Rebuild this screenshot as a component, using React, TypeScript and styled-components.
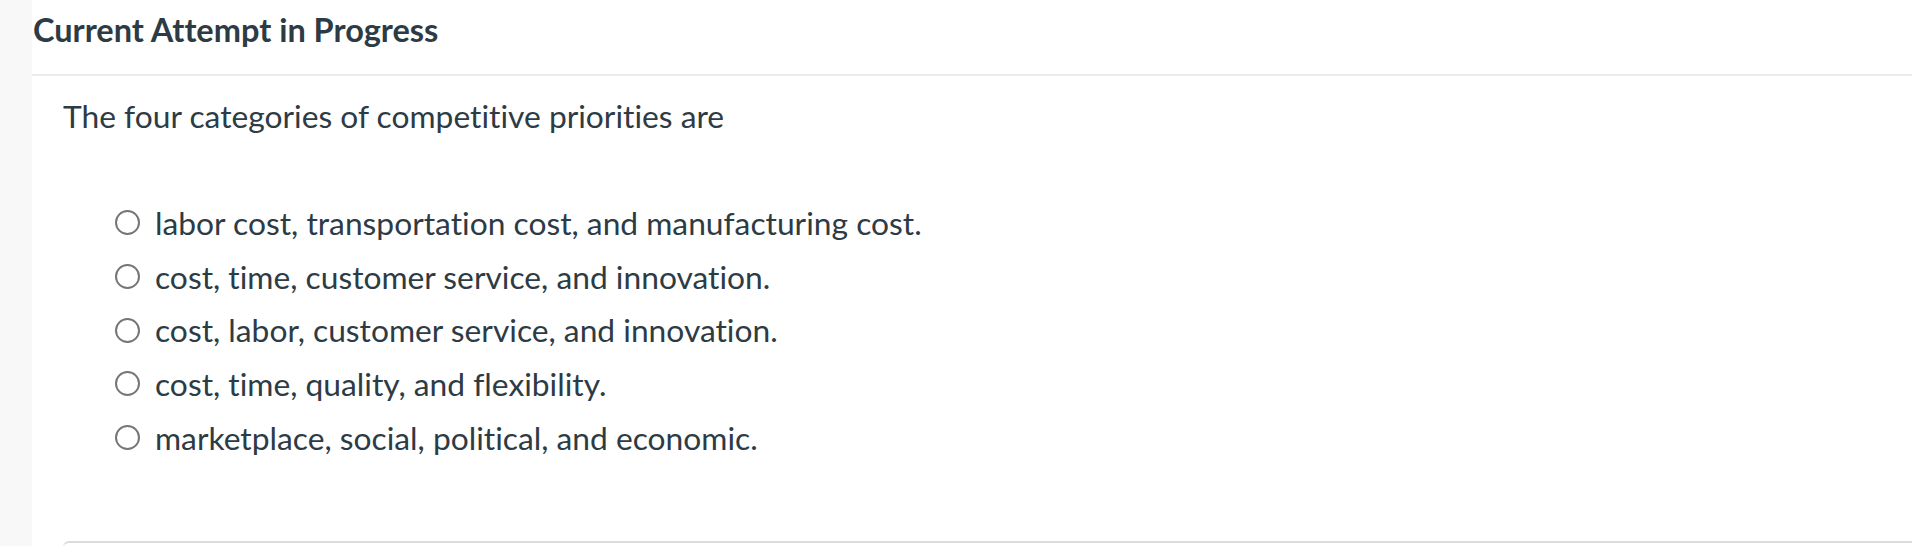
import React from "react";
import styled, { createGlobalStyle } from "styled-components";

const Global = createGlobalStyle`
  html, body { margin: 0; padding: 0; background: #ffffff; }
  body {
    font-family: Lato, "Open Sans", sans-serif;
    color: #2d3b45;
    font-variant-ligatures: none;
  }
`;

const Page = styled.div`
  display: flex;
  height: 546px;
  overflow: hidden;
`;

const SideStrip = styled.div`
  width: 32px;
  flex: none;
  background: #f8f8f8;
`;

const Main = styled.div`
  flex: 1;
  display: flex;
  flex-direction: column;
`;

const Header = styled.h2`
  margin: 0;
  padding: 10px 0 0 1px;
  height: 76px;
  flex: none;
  box-sizing: border-box;
  font-size: 32.5px;
  font-weight: 700;
  line-height: 40px;
  color: #2d3b45;
  border-bottom: 2px solid #ececec;
`;

const Body = styled.div`
  flex: none;
  padding: 16px 0 0 31px;
`;

const Question = styled.p`
  margin: 0;
  font-size: 31.75px;
  line-height: 48px;
`;

const OptionList = styled.ul`
  list-style: none;
  margin: 0;
  padding: 56px 0 0 52px;
  display: flex;
  flex-direction: column;
`;

const Option = styled.li`
  display: flex;
  align-items: center;
  height: 53.7px;
  font-size: 31.75px;
  gap: 15px;
`;

const Radio = styled.span`
  width: 25px;
  height: 25px;
  box-sizing: border-box;
  border: 2px solid #767676;
  border-radius: 50%;
  flex: none;
`;

const OptionText = styled.span`
  line-height: 40px;
`;

const NextBox = styled.div`
  margin: 77px 0 0 31px;
  height: 40px;
  flex: none;
  border-top: 2px solid #dcdcdc;
  border-left: 1px solid #e6e6e6;
  border-top-left-radius: 6px;
`;

const options = [
  "labor cost, transportation cost, and manufacturing cost.",
  "cost, time, customer service, and innovation.",
  "cost, labor, customer service, and innovation.",
  "cost, time, quality, and flexibility.",
  "marketplace, social, political, and economic.",
];

export default function App() {
  return (
    <Page>
      <Global />
      <SideStrip />
      <Main>
        <Header>Current Attempt in Progress</Header>
        <Body>
          <Question>The four categories of competitive priorities are</Question>
          <OptionList>
            {options.map((o) => (
              <Option key={o}>
                <Radio />
                <OptionText>{o}</OptionText>
              </Option>
            ))}
          </OptionList>
        </Body>
        <NextBox />
      </Main>
    </Page>
  );
}
